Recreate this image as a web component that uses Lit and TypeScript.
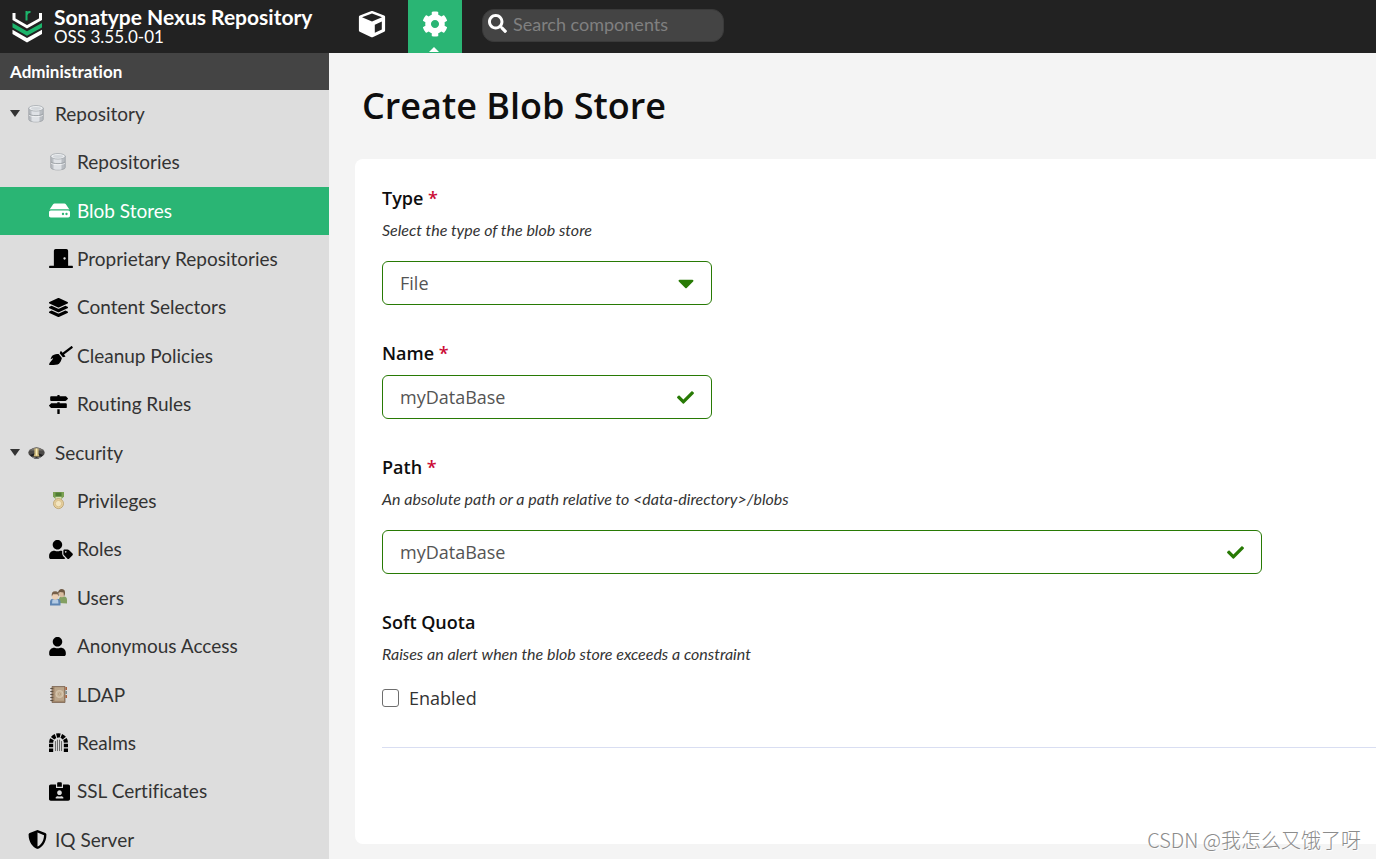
import { LitElement, html, css, svg, nothing, TemplateResult } from "lit";
import { customElement, property } from "lit/decorators.js";
import { classMap } from "lit/directives/class-map.js";

interface Glyph {
  w: number;
  h: number;
  body: TemplateResult;
}

const solid = (w: number, d: string): Glyph => ({ w, h: 512, body: svg`<path fill="currentColor" fill-rule="evenodd" d=${d}></path>` });

const database: Glyph = {
  w: 16,
  h: 18,
  body: svg`
    <path d="M.8 3v11.500c0 3.200 14.400 3.200 14.400 0V3z" fill="#b9bdc2" stroke="#989da2" stroke-width=".8"></path>
    <path d="M3.500 4v12.200q4.500 1 8 .2V4z" fill="#dfe2e6"></path>
    <path d="M1 9.900c1.500 2.300 12.500 2.300 14 0" fill="none" stroke="#f7f8f9" stroke-width=".8"></path>
    <path d="M1 8.900c1.500 2.300 12.500 2.300 14 0" fill="none" stroke="#999ea3" stroke-width=".9"></path>
    <ellipse cx="8" cy="3.300" rx="7.200" ry="2.800" fill="#eceef0" stroke="#a6abb0" stroke-width=".8"></ellipse>
    <ellipse cx="8" cy="3.500" rx="5" ry="1.400" fill="#d3d7db"></ellipse>`,
};

const glyphs: Record<string, Glyph> = {
  database,
  check: solid(512, "M173.898 439.404l-166.400-166.400c-9.997-9.997-9.997-26.206 0-36.204l36.203-36.204c9.997-9.998 26.207-9.998 36.204 0L192 312.690 432.095 72.596c9.997-9.997 26.207-9.997 36.204 0l36.203 36.204c9.997 9.997 9.997 26.206 0 36.204l-294.400 294.401c-9.998 9.997-26.207 9.997-36.204-.001z"),
  caret: solid(320, "M31.300 192h257.300c17.800 0 26.700 21.500 14.100 34.100L174.100 354.800c-7.800 7.800-20.500 7.800-28.300 0L17.200 226.100C4.600 213.500 13.500 192 31.300 192z"),
  search: solid(512, "M505 442.700L405.300 343c-4.500-4.500-10.600-7-17-7H372c27.600-35.300 44-79.700 44-128C416 93.100 322.900 0 208 0S0 93.100 0 208s93.100 208 208 208c48.300 0 92.700-16.400 128-44v16.300c0 6.400 2.500 12.500 7 17l99.700 99.700c9.400 9.400 24.600 9.400 33.900 0l28.300-28.300c9.400-9.400 9.400-24.600.1-34zM208 336c-70.700 0-128-57.200-128-128 0-70.700 57.200-128 128-128 70.700 0 128 57.200 128 128 0 70.700-57.200 128-128 128z"),
  cog: solid(512, "M487.400 315.700l-42.600-24.600c4.300-23.200 4.300-47 0-70.200l42.600-24.600c4.900-2.800 7.100-8.600 5.500-14-11.100-35.600-30-67.800-54.700-94.600-3.800-4.100-10-5.100-14.800-2.300L380.800 110c-17.900-15.400-38.500-27.300-60.800-35.100V25.800c0-5.600-3.900-10.500-9.400-11.700-36.700-8.200-74.300-7.800-109.200 0-5.500 1.200-9.400 6.100-9.400 11.700V75c-22.200 7.900-42.800 19.800-60.800 35.100L88.700 85.500c-4.900-2.800-11-1.900-14.800 2.300-24.700 26.700-43.600 58.900-54.700 94.600-1.700 5.400.6 11.200 5.500 14L67.300 221c-4.300 23.200-4.300 47 0 70.200l-42.600 24.600c-4.900 2.800-7.100 8.600-5.500 14 11.100 35.600 30 67.800 54.700 94.600 3.800 4.100 10 5.100 14.800 2.300l42.600-24.600c17.900 15.400 38.500 27.300 60.800 35.100v49.200c0 5.600 3.900 10.500 9.400 11.700 36.700 8.200 74.300 7.800 109.200 0 5.500-1.200 9.400-6.100 9.400-11.700v-49.200c22.200-7.900 42.800-19.800 60.800-35.100l42.600 24.600c4.900 2.800 11 1.900 14.800-2.300 24.700-26.700 43.600-58.900 54.700-94.600 1.500-5.500-.7-11.300-5.600-14.100zM256 336c-44.100 0-80-35.900-80-80s35.900-80 80-80 80 35.900 80 80-35.900 80-80 80z"),
  user: solid(448, "M224 256c70.700 0 128-57.300 128-128S294.700 0 224 0 96 57.300 96 128s57.300 128 128 128zm89.600 32h-16.700c-22.200 10.200-46.900 16-72.900 16s-50.600-5.800-72.900-16h-16.700C60.200 288 0 348.200 0 422.400V464c0 26.500 21.500 48 48 48h352c26.500 0 48-21.500 48-48v-41.600c0-74.200-60.200-134.400-134.400-134.400z"),
  layers: solid(512, "M12.410 148.020l232.940 105.670c6.800 3.090 14.490 3.090 21.290 0l232.940-105.670c16.550-7.510 16.550-32.520 0-40.030L266.650 2.310a25.607 25.607 0 0 0-21.290 0L12.410 107.980c-16.550 7.510-16.550 32.530 0 40.040zm487.180 88.280l-58.090-26.330-161.640 73.270c-7.560 3.430-15.590 5.170-23.860 5.170s-16.290-1.740-23.860-5.170L70.510 209.970l-58.100 26.330c-16.550 7.500-16.550 32.500 0 40l232.940 105.590c6.800 3.080 14.490 3.080 21.290 0L499.590 276.300c16.550-7.500 16.550-32.500 0-40zm0 127.800l-57.870-26.230-161.860 73.370c-7.560 3.430-15.590 5.170-23.860 5.170s-16.290-1.740-23.860-5.170L70.290 337.870 12.410 364.100c-16.550 7.500-16.550 32.500 0 40l232.940 105.590c6.800 3.080 14.490 3.080 21.290 0L499.590 404.100c16.550-7.500 16.550-32.500 0-40z"),
  hdd: solid(576, "M576 304v96c0 26.510-21.490 48-48 48H48c-26.510 0-48-21.490-48-48v-96c0-26.510 21.490-48 48-48h480c26.510 0 48 21.490 48 48zm-48-80a79.557 79.557 0 0 1 30.777 6.165L462.250 85.374A48.003 48.003 0 0 0 422.311 64H153.689a48 48 0 0 0-39.938 21.374L17.223 230.165A79.557 79.557 0 0 1 48 224h480zm-48 96c-17.673 0-32 14.327-32 32s14.327 32 32 32 32-14.327 32-32-14.327-32-32-32zm-96 0c-17.673 0-32 14.327-32 32s14.327 32 32 32 32-14.327 32-32-14.327-32-32-32z"),
  door: solid(640, "M624 448H512V50.800C512 22.780 490.470 0 464 0H175.990c-26.470 0-48 22.780-48 50.800V448H16c-8.840 0-16 7.160-16 16v32c0 8.840 7.160 16 16 16h608c8.840 0 16-7.160 16-16v-32c0-8.840-7.160-16-16-16zM415.990 288c-17.670 0-32-14.330-32-32s14.330-32 32-32 32 14.330 32 32c.01 17.670-14.320 32-32 32z"),
  broom: solid(640, "M256.470 216.770l86.730 109.180s-16.600 102.360-76.570 150.120C206.660 523.850 0 510.190 0 510.190s3.800-23.140 11-55.430l94.620-112.170c3.970-4.700-.87-11.620-6.650-9.500l-60.400 22.090c14.440-41.660 32.720-80.040 54.600-97.470 59.970-47.760 163.300-40.940 163.300-40.940zM636.530 31.030l-19.860-25c-5.490-6.900-15.520-8.050-22.410-2.560l-232.480 177.800-34.140-42.970c-5.090-6.410-15.140-5.210-18.590 2.210l-25.330 54.550 86.730 109.180 58.800-12.450c8-1.690 11.420-11.200 6.340-17.600l-34.090-42.920 232.480-177.800c6.890-5.480 8.040-15.530 2.550-22.440z"),
  signs: solid(512, "M507.310 84.690L464 41.370c-6-6-14.140-9.370-22.630-9.370H288V16c0-8.840-7.160-16-16-16h-32c-8.840 0-16 7.160-16 16v16H56c-13.250 0-24 10.750-24 24v80c0 13.250 10.750 24 24 24h385.370c8.490 0 16.620-3.370 22.630-9.370l43.310-43.310c6.250-6.260 6.250-16.380 0-22.630zM224 496c0 8.840 7.160 16 16 16h32c8.840 0 16-7.160 16-16V384h-64v112zm232-272H288v-32h-64v32H70.630c-8.490 0-16.620 3.370-22.630 9.370L4.690 276.690c-6.250 6.250-6.250 16.380 0 22.630L48 342.630c6 6 14.140 9.370 22.630 9.370H456c13.250 0 24-10.750 24-24v-80c0-13.250-10.750-24-24-24z"),
  userTag: solid(640, "M630.600 364.900l-90.300-90.200c-12-12-28.300-18.700-45.300-18.700h-79.300c-17.700 0-32 14.300-32 32v79.200c0 17 6.700 33.200 18.700 45.200l90.300 90.200c12.500 12.500 32.800 12.500 45.300 0l92.500-92.500c12.600-12.500 12.600-32.700.1-45.200zm-182.800-21c-13.300 0-24-10.700-24-24s10.700-24 24-24 24 10.700 24 24c0 13.200-10.700 24-24 24zm-223.800-88c70.700 0 128-57.300 128-128C352 57.300 294.700 0 224 0S96 57.300 96 128c0 70.600 57.300 127.900 128 127.900zm127.800 111.200V294c-12.200-3.600-24.900-6.200-38.200-6.200h-16.700c-22.200 10.200-46.900 16-72.900 16s-50.600-5.800-72.900-16h-16.700C60.200 287.900 0 348.100 0 422.300v41.600c0 26.500 21.500 48 48 48h352c15.500 0 29.100-7.500 37.900-18.900l-58-58c-18.100-18.100-28.100-42.200-28.100-67.900z"),
  idCard: solid(576, "M528 64H384v96H192V64H48C21.500 64 0 85.500 0 112v352c0 26.500 21.500 48 48 48h480c26.500 0 48-21.500 48-48V112c0-26.500-21.500-48-48-48zM288 224c35.300 0 64 28.700 64 64s-28.700 64-64 64-64-28.700-64-64 28.700-64 64-64zm93.300 224H194.700c-10.400 0-18.800-10-15.600-19.800 8.300-25.600 32.400-44.200 60.900-44.200h8.200c12.300 5.100 25.700 8 39.800 8s27.600-2.900 39.800-8h8.200c28.400 0 52.500 18.500 60.900 44.200 3.200 9.900-5.200 19.800-15.600 19.800zM352 32c0-17.700-14.300-32-32-32h-64c-17.700 0-32 14.300-32 32v96h128V32z"),
  shield: solid(512, "M466.500 83.700l-192-80a48.150 48.150 0 0 0-36.900 0l-192 80C27.700 91.100 16 108.600 16 128c0 198.500 114.500 335.700 221.500 380.300 11.800 4.900 25.100 4.900 36.900 0C360.100 472.600 496 349.300 496 128c0-19.400-11.700-36.900-29.500-44.300zM256.100 446.300l-.1-381 175.900 73.300c-3.300 151.400-82.100 261.100-175.800 307.700z"),
  dungeon: {
    w: 20,
    h: 20,
    body: svg`
      <path fill="none" stroke="currentColor" stroke-width="4.400" stroke-dasharray="3.900 1.150" d="M2.200 10.300A7.800 7.800 0 0 1 17.800 10.300"></path>
      <path fill="currentColor" d="M0 11.400h4.400v3.600H0zM0 16.300h4.400V20H0zM15.600 11.400H20v3.600h-4.400zM15.600 16.300H20V20h-4.400z"></path>
      <path stroke="#555" stroke-width=".9" fill="none" d="M6.800 8.500V19M8.900 7V19M11.100 7V19M13.200 8.500V19"></path>`,
  },
  cube: {
    w: 28,
    h: 28,
    body: svg`
      <path d="M14 2.400 25.600 6.800V20.400L14 25.800 2.400 20.400V6.800z" fill="#fff" stroke="#fff" stroke-width="3" stroke-linejoin="round"></path>
      <path d="M14 3.400 24 7.200 14 11.400 4 7.200z" fill="#222"></path>
      <path d="M16.800 14.800 23.800 11.600V19.400L16.800 22.800z" fill="#222"></path>`,
  },
  officer: {
    w: 17,
    h: 17,
    body: svg`
      <ellipse cx="8.500" cy="8.800" rx="8.200" ry="5" fill="#4b4947"></ellipse>
      <path d="M2 6.500Q8.500-.5 15 6.500z" fill="#77746f"></path>
      <path d="M2 11Q8.500 7.500 15 11Q8.500 19 2 11z" fill="#1f1f20"></path>
      <path d="M4 13Q8.500 15.600 13 13" fill="none" stroke="#8e8e8e" stroke-width="1"></path>
      <path d="M6.400 4.500h4.200v5.500l1 2.500H5.400l1-2.500z" fill="#cdb878"></path>
      <path d="M7.900 4.500h1.300v7H7.900z" fill="#f4e9bd"></path>`,
  },
  medal: {
    w: 17,
    h: 17,
    body: svg`
      <path d="M3 0h11v4.500l-3 3H6l-3-3z" fill="#7ba052"></path>
      <path d="M5.500 .6h6v4h-6z" fill="#4f7d34"></path>
      <path d="M5.500 4.800h6v2.500h-6z" fill="#d8e0b4"></path>
      <circle cx="8.500" cy="11.600" r="5" fill="#e9d3a1" stroke="#b69c67" stroke-width=".8"></circle>
      <circle cx="8.500" cy="11.600" r="3.200" fill="#f3e5c0" stroke="#d0b57c" stroke-width=".7"></circle>`,
  },
  people: {
    w: 17,
    h: 17,
    body: svg`
      <path d="M9 14V10.500Q9 7.500 12 7.500H14Q17 7.500 17 11V14.500z" fill="#84a062"></path>
      <ellipse cx="11.800" cy="4.500" rx="3" ry="3.800" fill="#d9bda0"></ellipse>
      <path d="M8 4.500Q8 0 12 0 15.500 .2 15 5L14 7.500 13.500 3.500 10 3z" fill="#6f5943"></path>
      <path d="M0 16.500V13Q0 10 3 9.800H7.500Q10.500 10 10.500 13V16.500z" fill="#5f86b4"></path>
      <path d="M2.500 10.500H8L8.500 14.500H2z" fill="#b4cbe4"></path>
      <ellipse cx="5.200" cy="7" rx="3.200" ry="3.800" fill="#ebcfb4"></ellipse>
      <path d="M1.800 7.500Q1 2.300 5.200 2.300T8.700 7.500L7.500 5.200H3z" fill="#77604a"></path>`,
  },
  book: {
    w: 17,
    h: 17,
    body: svg`
      <path d="M2 .5h13V16.500H2z" fill="#a1866a" stroke="#7b6553" stroke-width=".8"></path>
      <path d="M4.500 1.200H14V14.800H4.500z" fill="#bba58a"></path>
      <path d="M15.400 1H17V4h-1.600zM15.400 9H17v3h-1.600z" fill="#a7623e"></path>
      <path d="M15.400 5H17v3h-1.600z" fill="#7d8d8d"></path>
      <path d="M.3 2.500h3M.3 5.500h3M.3 8.500h3M.3 11.500h3M.3 14.500h3" stroke="#5e5144" stroke-width="1"></path>
      <circle cx="9.500" cy="8" r="3.600" fill="#cbb89c" stroke="#dccdb6" stroke-width=".8"></circle>
      <circle cx="9.500" cy="8" r="1.300" fill="none" stroke="#b09a7c" stroke-width=".7"></circle>`,
  },
};

@customElement("nx-icon")
export class NxIcon extends LitElement {
  @property() name = "";
  @property({ type: Number }) size = 19;

  static styles = css`
    :host { display: inline-flex; flex: none; }
    .glyph { display: block; overflow: visible; }
  `;

  render() {
    const g = glyphs[this.name];
    if (!g) return nothing;
    return html`<svg class="glyph" aria-hidden="true" viewBox="0 0 ${g.w} ${g.h}" width=${Math.round((this.size * g.w) / g.h)} height=${this.size}>${g.body}</svg>`;
  }
}

interface Entry {
  label: string;
  icon: string;
  level: 1 | 2;
  group?: boolean;
  raster?: boolean;
  active?: boolean;
}

const entries: Entry[] = [
  { label: "Repository", icon: "database", level: 1, group: true, raster: true },
  { label: "Repositories", icon: "database", level: 2, raster: true },
  { label: "Blob Stores", icon: "hdd", level: 2, active: true },
  { label: "Proprietary Repositories", icon: "door", level: 2 },
  { label: "Content Selectors", icon: "layers", level: 2 },
  { label: "Cleanup Policies", icon: "broom", level: 2 },
  { label: "Routing Rules", icon: "signs", level: 2 },
  { label: "Security", icon: "officer", level: 1, group: true, raster: true },
  { label: "Privileges", icon: "medal", level: 2, raster: true },
  { label: "Roles", icon: "userTag", level: 2 },
  { label: "Users", icon: "people", level: 2, raster: true },
  { label: "Anonymous Access", icon: "user", level: 2 },
  { label: "LDAP", icon: "book", level: 2, raster: true },
  { label: "Realms", icon: "dungeon", level: 2 },
  { label: "SSL Certificates", icon: "idCard", level: 2 },
  { label: "IQ Server", icon: "shield", level: 1 },
];

@customElement("nx-header")
export class NxHeader extends LitElement {
  static styles = css`
    :host { display: flex; height: 53px; background: #222; color: #fff; font-family: Lato, sans-serif; }
    .brand { display: flex; width: 342px; box-sizing: border-box; padding: 0 0 0 11px; gap: 11px; align-items: center; }
    .names { display: flex; flex-direction: column; }
    .product { font-size: 21px; line-height: 20px; font-weight: 700; }
    .version { font-size: 17px; line-height: 20px; }
    .modes { display: flex; }
    .mode { position: relative; display: flex; align-items: center; justify-content: center; width: 54px; padding: 0 0 5px; border: 0; margin: 0; background: none; color: #fff; }
    .modes .mode:first-child { width: 66px; padding-right: 6px; }
    .mode.on { background: #2ab574; }
    .mode.on::after { content: ""; position: absolute; bottom: 1px; left: 50%; margin-left: -6px; border: 5px solid transparent; border-top: 0; border-bottom-color: #fff; }
    .search { display: flex; align-items: center; align-self: flex-start; gap: 6px; box-sizing: border-box; height: 33px; width: 242px; margin: 9px 0 0 20px; padding: 0 12px 4px 5px; border: 1px solid #3a3a3a; border-radius: 12px; background: #444; }
    .box { flex: 1; min-width: 0; border: 0; padding: 0; outline: 0; background: none; color: #fff; font: 18px/24px Lato, sans-serif; }
    .box::placeholder { color: #808080; opacity: 1; }
  `;

  render() {
    return html`
      <div class="brand">
        <svg width="32" height="36" viewBox="0 0 32 36" aria-hidden="true">
          <path d="M3 4V10.200L16 17.700 29.500 10.200V4" fill="none" stroke="#fff" stroke-width="3"></path>
          <path d="M1.500 14 16 22.200 31 14V18.400L16 26.800 1.500 18.400z" fill="#1cb46b"></path>
          <path d="M1.500 20.800 16 29 31 20.800V25L16 33.400 1.500 25z" fill="#fff"></path>
          <path d="M15.500 11.500V2M15.500 6Q16.200 2.600 19.500 3" fill="none" stroke="#1cb46b" stroke-width="2"></path>
        </svg>
        <div class="names">
          <span class="product">Sonatype Nexus Repository</span>
          <span class="version">OSS 3.55.0-01</span>
        </div>
      </div>
      <div class="modes">
        <button class="mode" aria-label="Browse"><nx-icon name="cube" size="28"></nx-icon></button>
        <button class="mode on" aria-label="Administration"><nx-icon name="cog" size="26"></nx-icon></button>
      </div>
      <label class="search">
        <nx-icon name="search" size="19"></nx-icon>
        <input class="box" type="text" placeholder="Search components" aria-label="Search components" />
      </label>
    `;
  }
}

@customElement("nx-sidebar")
export class NxSidebar extends LitElement {
  static styles = css`
    :host { display: block; background: #ddd; font-family: Lato, sans-serif; font-variant-ligatures: none; }
    .title { margin: 0; padding: 0 10px; background: #444; color: #fff; font-size: 17px; line-height: 37px; font-weight: 700; }
    .list { display: grid; grid-auto-rows: 48px 49px 48px 48px 49px; margin: 0; padding: 0; list-style: none; }
    .link { display: flex; align-items: center; height: 100%; box-sizing: border-box; padding-bottom: 1px; color: #333; text-decoration: none; font-size: 19px; line-height: 24px; }
    .l1 { padding-left: 10px; }
    .l2 { padding-left: 49px; }
    .toggle { width: 18px; color: #333; }
    .toggle svg { display: block; }
    .slot { display: flex; box-sizing: border-box; width: 28px; color: #000; }
    .l1 .slot { width: 27px; }
    .l2 .raster { padding-left: 1px; }
    .active { background: #2ab574; color: #fff; }
    .active .slot { color: #fff; }
  `;

  render() {
    return html`
      <h2 class="title">Administration</h2>
      <nav aria-label="Administration">
        <ul class="list">
          ${entries.map(
            (e) => html`<li>
              <a href="#" aria-current=${e.active ? "page" : nothing} class=${classMap({ link: true, l1: e.level === 1, l2: e.level === 2, active: !!e.active })}>
                ${e.level === 1
                  ? html`<span class="toggle">${e.group ? html`<svg width="10" height="7" viewBox="0 0 10 7" aria-hidden="true"><path d="M0 0h10L5 7z" fill="currentColor"></path></svg>` : nothing}</span>`
                  : nothing}
                <span class=${classMap({ slot: true, raster: !!e.raster })}><nx-icon name=${e.icon} size=${e.icon === "database" ? 18 : e.raster ? 17 : 19}></nx-icon></span>
                <span>${e.label}</span>
              </a>
            </li>`
          )}
        </ul>
      </nav>
    `;
  }
}

@customElement("nx-blob-form")
export class NxBlobForm extends LitElement {
  static styles = css`
    :host { display: block; padding: 31px 0 15px 26px; font-family: "Open Sans", sans-serif; color: #0e0e0e; }
    .heading { margin: 0 0 31px 7px; font-size: 36px; line-height: 44px; font-weight: 600; }
    .card { box-sizing: border-box; min-height: 685px; padding: 27px 0 0 27px; background: #fff; border-radius: 8px 0 0 8px; }
    .field { display: flex; flex-direction: column; align-items: flex-start; margin: 0 0 36px; padding: 0; border: 0; }
    .label { padding: 0; font-size: 18px; line-height: 24px; font-weight: 600; }
    .star { color: #cb0c36; }
    .help { margin: 10px 0 21px; color: #333; font: italic 16px/20px Lato, sans-serif; font-variant-ligatures: none; }
    .control { display: flex; align-items: center; box-sizing: border-box; width: 330px; height: 44px; padding-right: 17px; border: 1px solid #287a05; border-radius: 6px; color: #287a05; }
    .wide { width: 100%; max-width: 880px; }
    .plain { margin-top: 10px; }
    .value { flex: 1; align-self: stretch; min-width: 0; appearance: none; border: 0; outline: 0; margin: 0; padding: 0 0 0 17px; background: none; color: #545454; font: 18px/24px "Open Sans", sans-serif; }
    .tick { display: flex; align-items: center; gap: 10px; color: #333; font-size: 18px; line-height: 26px; }
    .box { appearance: none; width: 17px; height: 18px; margin: 0; border: 1px solid #6e6e6e; border-radius: 3px; background: #fff; }
    .rule { margin: 0; border: 0; border-top: 1px solid #d9def2; }
  `;

  render() {
    const star = html`<span class="star" aria-hidden="true">*</span>`;
    return html`
      <h1 class="heading">Create Blob Store</h1>
      <form class="card">
        <div class="field">
          <label class="label" for="type">Type ${star}</label>
          <p class="help" id="type-help">Select the type of the blob store</p>
          <div class="control">
            <select class="value" id="type" aria-describedby="type-help"><option>File</option></select>
            <nx-icon name="caret" size="26"></nx-icon>
          </div>
        </div>
        <div class="field">
          <label class="label" for="name">Name ${star}</label>
          <div class="control plain">
            <input class="value" id="name" type="text" value="myDataBase" />
            <nx-icon name="check" size="17"></nx-icon>
          </div>
        </div>
        <div class="field">
          <label class="label" for="path">Path ${star}</label>
          <p class="help" id="path-help">An absolute path or a path relative to &lt;data-directory&gt;/blobs</p>
          <div class="control wide">
            <input class="value" id="path" type="text" value="myDataBase" aria-describedby="path-help" />
            <nx-icon name="check" size="17"></nx-icon>
          </div>
        </div>
        <div class="field" role="group" aria-labelledby="quota">
          <span class="label" id="quota">Soft Quota</span>
          <p class="help">Raises an alert when the blob store exceeds a constraint</p>
          <label class="tick"><input class="box" type="checkbox" />Enabled</label>
        </div>
        <hr class="rule" />
      </form>
    `;
  }
}

@customElement("app-root")
export class AppRoot extends LitElement {
  static styles = css`
    :host { display: flex; flex-direction: column; position: relative; height: 100vh; overflow: hidden; background: #f4f4f4; }
    .body { display: flex; flex: 1; min-height: 0; }
    .side { flex: none; width: 329px; overflow: hidden; }
    .main { flex: 1; min-width: 0; overflow: hidden; }
    .credit { position: absolute; right: 15px; bottom: 5px; color: #8c8c8c; font: 300 20px/28px "Noto Sans CJK SC", sans-serif; text-shadow: 1px 1px 1px #fff; }
  `;

  render() {
    return html`
      <nx-header></nx-header>
      <div class="body">
        <nx-sidebar class="side"></nx-sidebar>
        <nx-blob-form class="main"></nx-blob-form>
      </div>
      <span class="credit">CSDN @我怎么又饿了呀</span>
    `;
  }
}
